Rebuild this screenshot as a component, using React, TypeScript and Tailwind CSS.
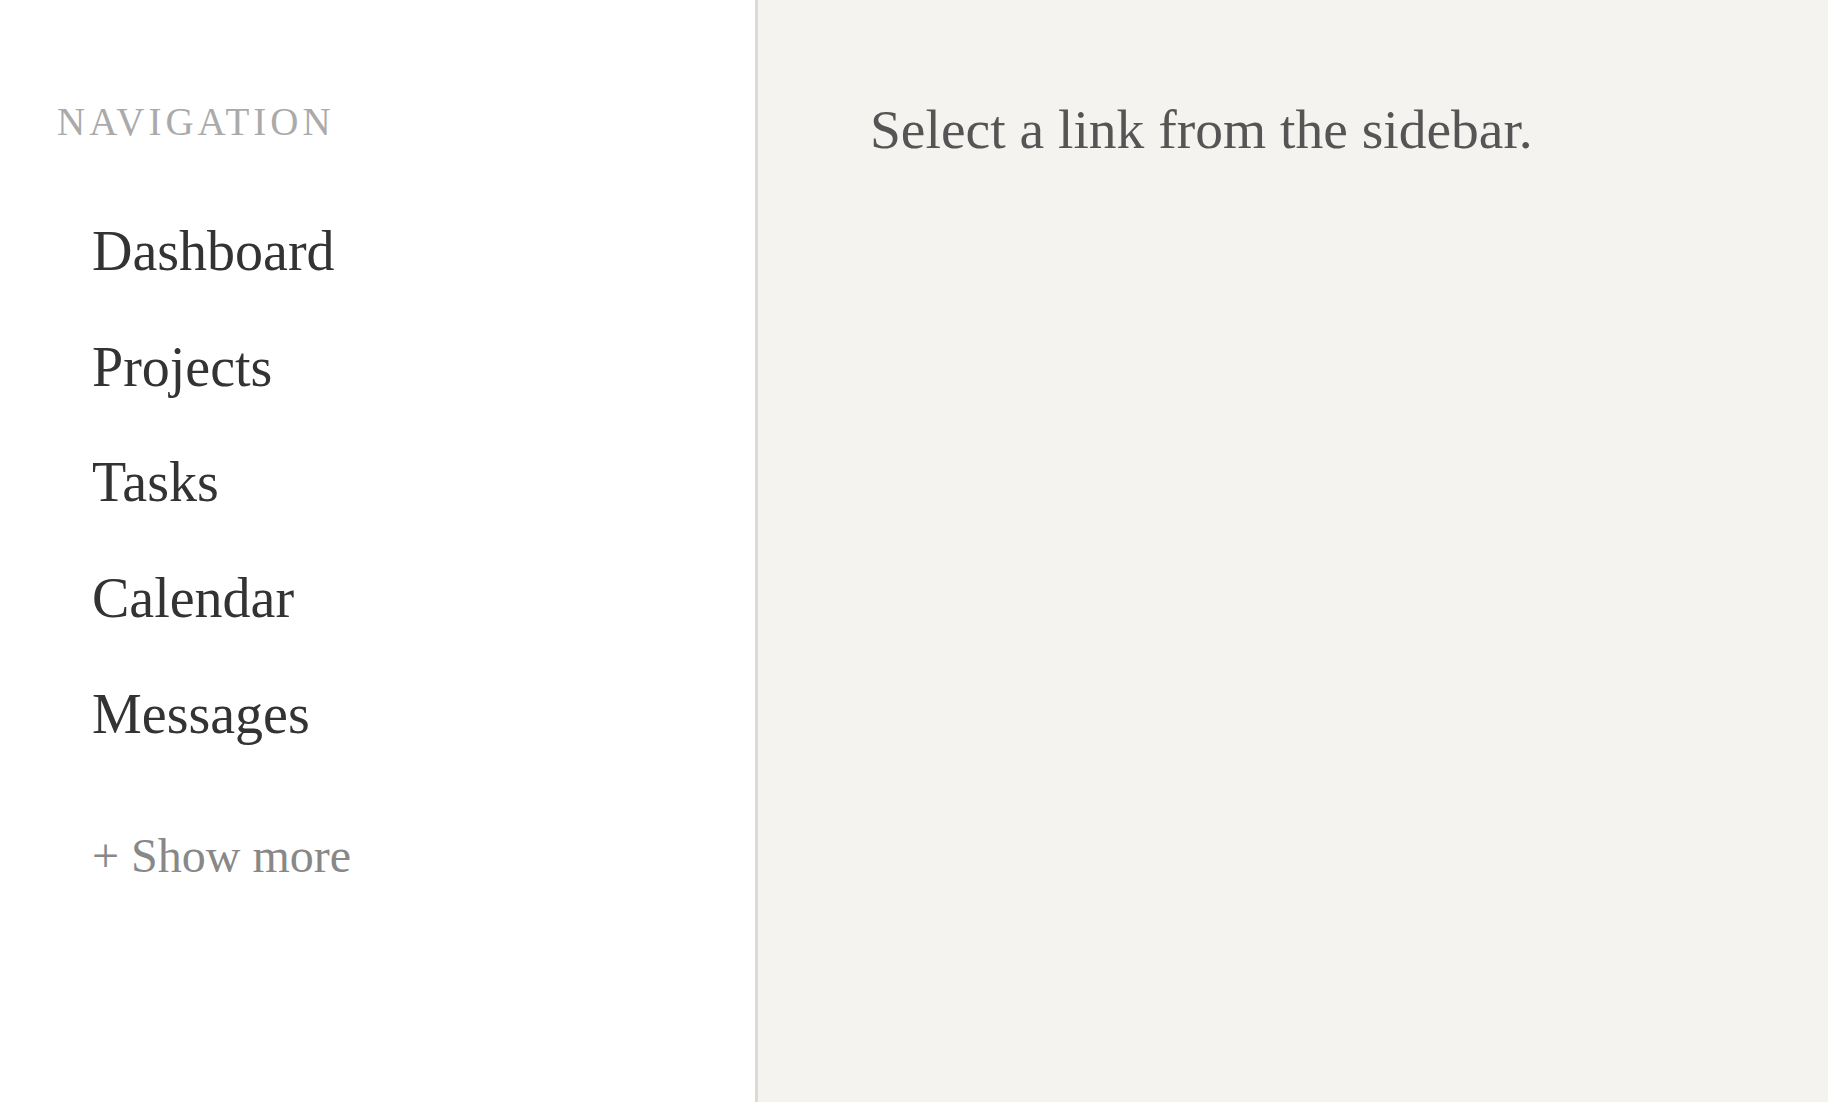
const items = ["Dashboard", "Projects", "Tasks", "Calendar", "Messages"];

export default function App() {
  return (
    <div className="flex h-screen w-full font-['Georgia','Liberation_Serif',serif]">
      <aside className="w-[758px] shrink-0 border-r-[3px] border-[#dddad5] bg-white pl-[57px] pt-[102px]">
        <div className="text-[39px] leading-none tracking-[4px] text-[#aaaaaa]">NAVIGATION</div>
        <nav className="mt-[82px] ml-[35px] flex flex-col gap-[59.7px]">
          {items.map((label) => (
            <a key={label} href="#" className="text-[56px] leading-[56px] text-[#333333]">
              {label}
            </a>
          ))}
        </nav>
        <button className="mt-[90px] ml-[35px] block text-[48px] leading-none text-[#888888]">
          + Show more
        </button>
      </aside>
      <main className="flex-1 bg-[#f4f3f0] pl-[112px] pt-[102px]">
        <p className="text-[55.5px] leading-none text-[#555555]">Select a link from the sidebar.</p>
      </main>
    </div>
  );
}
